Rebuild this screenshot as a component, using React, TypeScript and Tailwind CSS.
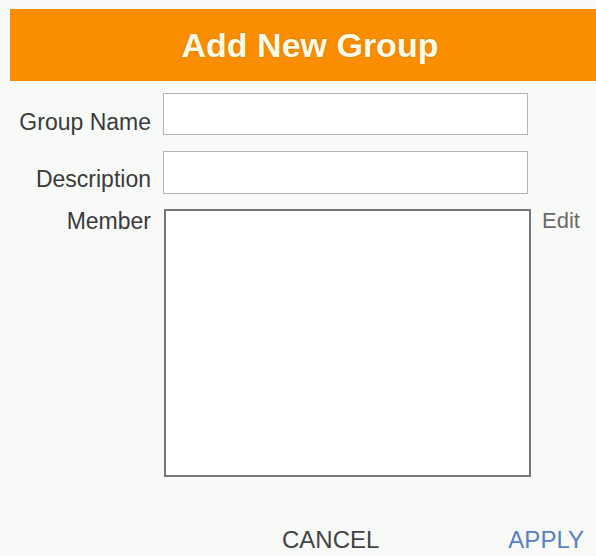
export default function App() {
  return (
    <div className="w-full h-[556px] overflow-hidden bg-[#f8faf8] font-['Liberation_Sans',Arial,sans-serif]">
      {/* header */}
      <div className="ml-[10px] mt-[9px] h-[72px] bg-[#fb8e00] flex items-center justify-center pl-[14px]">
        <h1 className="text-[34px] font-bold text-[#fffbea] leading-none [text-shadow:0_0_2px_rgba(120,60,0,0.35)]">
          Add New Group
        </h1>
      </div>

      {/* form */}
      <div className="mt-[12px] flex flex-col">
        <div className="flex items-end">
          <label className="w-[151px] text-right text-[23px] leading-[26px] text-[#3a3a3a]">Group Name</label>
          <div className="ml-[12px] w-[365px] h-[42px] border border-[#b3b3b3] bg-white" />
        </div>
        <div className="mt-[16px] flex items-end">
          <label className="w-[151px] text-right text-[23px] leading-[26px] pb-[2px] text-[#3a3a3a]">Description</label>
          <div className="ml-[12px] w-[365px] h-[43px] border border-[#b3b3b3] bg-white" />
        </div>
        <div className="mt-[15px] flex items-start">
          <label className="w-[151px] text-right text-[23px] leading-[26px] -mt-[1px] text-[#3a3a3a]">Member</label>
          <div className="ml-[13px] w-[367px] h-[268px] border-2 border-[#777777] bg-white" />
          <span className="ml-[11px] text-[22px] leading-[25px] -mt-[1px] text-[#6a6a6a]">Edit</span>
        </div>
      </div>

      {/* actions */}
      <div className="mt-[49px] flex items-center pl-[282px] gap-[129px] text-[24px] leading-[28px]">
        <button className="text-[#444444]">CANCEL</button>
        <button className="text-[#5a7fc6]">APPLY</button>
      </div>
    </div>
  );
}
